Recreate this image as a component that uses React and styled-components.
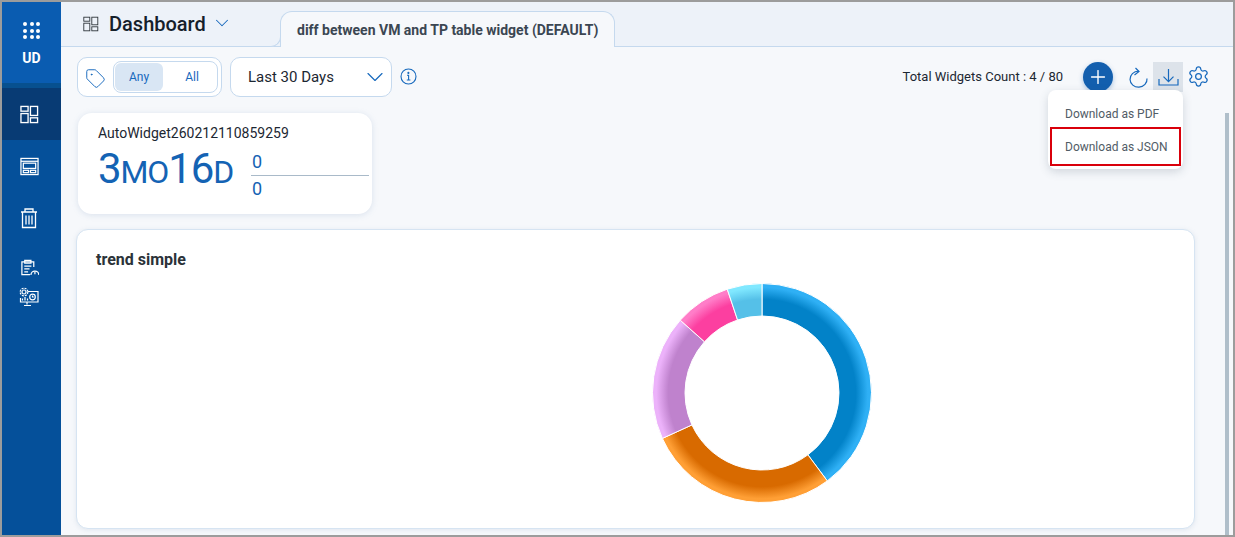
import React from "react";
import styled, { createGlobalStyle } from "styled-components";
import { ChevronDown, Settings, Tag, Plus } from "lucide-react";

const GlobalStyle = createGlobalStyle`
  html, body { margin: 0; padding: 0; }
  body { font-family: Roboto, "Liberation Sans", sans-serif; background: #fff; }
  * { box-sizing: border-box; }
`;

const Frame = styled.div`
  width: 1235px;
  height: 537px;
  border: 2px solid #9c9c9c;
  display: flex;
  overflow: hidden;
  position: relative;
`;

const Sidebar = styled.aside`
  width: 59px;
  flex-shrink: 0;
  background: #05509a;
  display: flex;
  flex-direction: column;
  align-items: center;
`;

const Brand = styled.div`
  width: 100%;
  height: 86px;
  background: #0a5cb1;
  border-bottom: 5px solid #07508f;
  display: flex;
  flex-direction: column;
  align-items: center;
  padding-top: 20px;
  gap: 11px;
  color: #fff;
  font-size: 14px;
  font-weight: 700;
`;

const Dots = styled.div`
  display: grid;
  grid-template-columns: repeat(3, 4px);
  gap: 2.5px;
`;

const Dot = styled.span`
  width: 4px;
  height: 4px;
  border-radius: 50%;
  background: #fff;
`;

const NavItem = styled.div`
  width: 100%;
  height: ${(p) => p.$h}px;
  padding-right: 5px;
  display: flex;
  align-items: center;
  justify-content: center;
  background: ${(p) => (p.$active ? "#083b74" : "transparent")};
`;

const Main = styled.div`
  flex: 1;
  display: flex;
  flex-direction: column;
  background: #f6f8fb;
  min-width: 0;
`;

const Header = styled.header`
  height: 45px;
  background: #edf2f9;
  border-bottom: 1px solid #c5d9ee;
  display: flex;
  align-items: flex-end;
  padding-left: 22px;
  flex-shrink: 0;
`;

const TitleGroup = styled.div`
  display: flex;
  align-items: center;
  align-self: stretch;
  width: 197px;
  gap: 10px;
  color: #15202b;
  font-size: 20px;
  font-weight: 500;
`;

const TitleChevron = styled(ChevronDown)`
  margin-left: -5px;
  margin-top: -3px;
`;

const Tab = styled.div`
  position: relative;
  width: 335px;
  height: 36px;
  margin-bottom: -1px;
  background: #f6f8fb;
  border: 1px solid #c5d9ee;
  border-bottom: none;
  border-radius: 12px 12px 0 0;
  display: flex;
  align-items: center;
  padding-left: 16px;
  font-size: 14px;
  font-weight: 700;
  color: #3b4652;

  &::before {
    content: "";
    position: absolute;
    left: -11px;
    bottom: 0;
    width: 10px;
    height: 10px;
    background: #edf2f9;
    border-right: 1px solid #c5d9ee;
    border-bottom: 1px solid #c5d9ee;
    border-bottom-right-radius: 10px;
  }
`;

const Content = styled.div`
  flex: 1;
  position: relative;
  padding: 9px 0 0 15px;
`;

const Toolbar = styled.div`
  display: flex;
  align-items: center;
  height: 41px;
  padding-left: 1px;
`;

const TagGroup = styled.div`
  width: 145px;
  height: 40px;
  background: #fff;
  border: 1px solid #c5d9ee;
  border-radius: 10px;
  display: flex;
  align-items: center;
  padding-left: 7px;
  gap: 7px;
`;

const TagIcon = styled(Tag)`
  margin-top: 3px;
`;

const Toggle = styled.div`
  width: 105px;
  height: 32px;
  border: 1px solid #c5d9ee;
  border-radius: 8px;
  display: flex;
  align-items: center;
  padding: 1px;
`;

const ToggleOption = styled.div`
  width: 48px;
  height: 28px;
  border-radius: 6px;
  background: ${(p) => (p.$on ? "#d9e6f4" : "transparent")};
  color: #1769bd;
  font-size: 12px;
  display: flex;
  align-items: center;
  justify-content: center;
  margin-right: ${(p) => (p.$on ? "5px" : "0")};
`;

const RangeSelect = styled.div`
  width: 162px;
  height: 40px;
  margin-left: 8px;
  background: #fff;
  border: 1px solid #c5d9ee;
  border-radius: 10px;
  display: flex;
  align-items: center;
  justify-content: space-between;
  padding: 0 2px 0 17px;
  font-size: 15px;
  color: #1c2732;
`;

const InfoWrap = styled.div`
  margin-left: 8px;
  display: flex;
`;

const Actions = styled.div`
  margin-left: auto;
  display: flex;
  align-items: center;
  padding-right: 20px;
`;

const Count = styled.span`
  font-size: 13px;
  color: #1c2732;
  margin-right: 20px;
`;

const AddButton = styled.div`
  width: 30px;
  height: 30px;
  border-radius: 50%;
  background: #135fae;
  box-shadow: 0 2px 5px rgba(19, 95, 174, 0.35);
  color: #fff;
  display: flex;
  align-items: center;
  justify-content: center;
  margin-right: 10px;
`;

const IconButton = styled.div`
  width: 30px;
  height: 30px;
  display: flex;
  align-items: center;
  justify-content: center;
  background: ${(p) => (p.$on ? "#dde3ea" : "transparent")};
`;

const Menu = styled.div`
  position: absolute;
  top: 43px;
  right: 50px;
  width: 135px;
  height: 79px;
  background: #fff;
  border-radius: 8px;
  box-shadow: 0 3px 10px rgba(60, 80, 100, 0.2);
  padding: 5px 2px 3px;
  display: flex;
  flex-direction: column;
  z-index: 2;
`;

const MenuItem = styled.div`
  height: ${(p) => (p.$boxed ? "39px" : "32px")};
  padding-left: ${(p) => (p.$boxed ? "13px" : "15px")};
  padding-top: ${(p) => (p.$boxed ? "0" : "6px")};
  display: flex;
  align-items: center;
  font-size: 12px;
  color: #515c66;
  border: ${(p) => (p.$boxed ? "2px solid #d9000b" : "none")};
`;

const WidgetCard = styled.div`
  width: 294px;
  height: 101px;
  margin: 16px 0 0 2px;
  background: #fff;
  border-radius: 14px;
  box-shadow: 0 1px 6px rgba(120, 150, 185, 0.22);
  padding: 12px 3px 0 20px;
`;

const WidgetName = styled.div`
  font-size: 14px;
  color: #1c2732;
  line-height: 16px;
  margin-bottom: -2px;
`;

const WidgetBody = styled.div`
  display: flex;
  align-items: center;
  color: #1463b4;
`;

const Duration = styled.div`
  width: 153px;
  display: flex;
  align-items: baseline;
  line-height: 44px;
  letter-spacing: -1.1px;
`;

const BigNum = styled.span`
  font-size: 42px;
`;

const BigUnit = styled.span`
  font-size: 32px;
`;

const Ratio = styled.div`
  flex: 1;
  display: flex;
  flex-direction: column;
  font-size: 18px;
  line-height: 26px;
  padding-top: 10px;
`;

const RatioValue = styled.div`
  padding-left: 1px;
  border-top: ${(p) => (p.$lower ? "1px solid #a9bac9" : "none")};
`;

const ChartCard = styled.section`
  width: 1119px;
  height: 300px;
  margin-top: 15px;
  background: #fff;
  border: 1px solid #d6e4f2;
  border-radius: 12px;
  box-shadow: 0 1px 5px rgba(120, 150, 185, 0.18);
  padding: 19px 19px 0;
  display: flex;
  flex-direction: column;
`;

const ChartTitle = styled.h3`
  margin: 2px 0 0;
  font-size: 16px;
  font-weight: 700;
  line-height: 18px;
  color: #2b3238;
`;

const ChartArea = styled.div`
  display: flex;
  justify-content: center;
  margin-top: 14px;
  padding-left: 252px;
`;

const ScrollThumb = styled.div`
  position: absolute;
  top: 66px;
  right: 4px;
  bottom: 0;
  width: 4px;
  background: #b0bfca;
`;

const SEGMENTS = [
  { id: "blue", from: 0, to: 143.4, base: "#0282c8", rim: "#2fb0f5" },
  { id: "orange", from: 143.4, to: 245.5, base: "#d86a00", rim: "#ff9f35" },
  { id: "purple", from: 245.5, to: 311.7, base: "#bf82cd", rim: "#ecb2fa" },
  { id: "pink", from: 311.7, to: 341.5, base: "#fc3fa0", rim: "#ff7dc8" },
  { id: "sky", from: 341.5, to: 360, base: "#55c0e8", rim: "#80e8ff" },
];

const polar = (r, deg) => {
  const a = (deg * Math.PI) / 180;
  return [110 + r * Math.sin(a), 110 - r * Math.cos(a)];
};

const sector = (from, to, outer = 109.5, inner = 77) => {
  const large = to - from > 180 ? 1 : 0;
  const [x1, y1] = polar(outer, from);
  const [x2, y2] = polar(outer, to);
  const [x3, y3] = polar(inner, to);
  const [x4, y4] = polar(inner, from);
  return `M${x1} ${y1}A${outer} ${outer} 0 ${large} 1 ${x2} ${y2}L${x3} ${y3}A${inner} ${inner} 0 ${large} 0 ${x4} ${y4}Z`;
};

const Donut = () => (
  <svg width="220" height="220" viewBox="0 0 220 220">
    <defs>
      {SEGMENTS.map((s) => (
        <radialGradient key={s.id} id={s.id} gradientUnits="userSpaceOnUse" cx="110" cy="110" r="109">
          <stop offset="0.86" stopColor={s.base} />
          <stop offset="0.97" stopColor={s.rim} />
        </radialGradient>
      ))}
    </defs>
    {SEGMENTS.map((s) => (
      <path key={s.id} d={sector(s.from, s.to)} fill={`url(#${s.id})`} stroke="#fff" strokeWidth="1" strokeLinejoin="round" />
    ))}
  </svg>
);

const DashIcon = ({ color = "#fff", size = 19, sw = 1.4 }) => (
  <svg width={size} height={size} viewBox="0 0 20 20" fill="none" stroke={color} strokeWidth={sw}>
    <rect x="1" y="1.5" width="7.5" height="5" />
    <rect x="1" y="9" width="7.5" height="9.5" />
    <rect x="11" y="1.5" width="7.5" height="9.5" />
    <rect x="11" y="13.5" width="7.5" height="5" />
  </svg>
);

const WindowIcon = () => (
  <svg width="19" height="19" viewBox="0 0 20 20" fill="none" stroke="#fff" strokeWidth="1.3">
    <rect x="1" y="1.5" width="18" height="17" />
    <path d="M1 4.5h18" />
    <rect x="3.5" y="6.5" width="13" height="5.5" />
    <rect x="3.5" y="14" width="5.5" height="2.5" />
    <rect x="11" y="14" width="5.5" height="2.5" />
  </svg>
);

const TrashIcon = () => (
  <svg width="18" height="21" viewBox="0 0 18 21" fill="none" stroke="#fff" strokeWidth="1.3">
    <path d="M1 4h16M5 4V1h8v3M2.5 4v15.5h13V4" />
    <path d="M6 7.5v9M9 7.5v9M12 7.5v9" />
  </svg>
);

const ReportIcon = () => (
  <svg width="19" height="17" viewBox="0 0 20 17" fill="none" stroke="#fff" strokeWidth="1.3">
    <path d="M10.5 16H2V2.5h12.5V8" />
    <path d="M5 1h6.5v3H5zM4.5 7h7.5M4.5 10h5.5M4.5 13h4" />
    <path d="M11.5 16.5a4.2 4.2 0 0 1 8.4 0" />
    <path d="M15.7 13v2.5" />
  </svg>
);

const MonitorIcon = () => (
  <svg width="20" height="20" viewBox="0 0 20 20" fill="none" stroke="#fff" strokeWidth="1.2">
    <path d="M9 4.5h10v10.5H1.5v-4" />
    <path d="M8 15v2.5M5 18.5h7" />
    <circle cx="5" cy="5" r="2" />
    <circle cx="5" cy="5" r="3.8" strokeDasharray="2 1" />
    <circle cx="13.5" cy="10" r="2.8" />
    <path d="M13.5 8.5V10h1.3M3.5 13.5v-2M6 13.5V10M8.5 13.5v-2" />
  </svg>
);

const InfoIcon = () => (
  <svg width="17" height="17" viewBox="0 0 17 17" fill="none" stroke="#1769bd" strokeWidth="1.1">
    <circle cx="8.5" cy="8.5" r="7.5" />
    <path d="M7 7.3h1.6v4.6M6.8 12h3.6" />
    <circle cx="8.4" cy="4.9" r="0.5" fill="#1769bd" />
  </svg>
);

const RefreshIcon = () => (
  <svg width="20" height="22" viewBox="0 0 20 22" fill="none" stroke="#1769bd" strokeWidth="1.2">
    <path d="M10.5 5.2A8.5 8 0 1 0 19 12.5" />
    <path d="M7.5 2 11 5.5 6.5 9" />
  </svg>
);

const DownloadIcon = () => (
  <svg width="21" height="20" viewBox="0 0 21 20" fill="none" stroke="#1769bd" strokeWidth="1.2">
    <path d="M10.5 2v13M5.5 9.7l5 5 5-5" />
    <path d="M1 12v6h19v-6" />
  </svg>
);

const App = () => (
  <Frame>
    <GlobalStyle />
    <Sidebar>
      <Brand>
        <Dots>
          {Array.from({ length: 9 }, (_, i) => (
            <Dot key={i} />
          ))}
        </Dots>
        UD
      </Brand>
      <NavItem $h={52} $active>
        <DashIcon />
      </NavItem>
      <NavItem $h={52}>
        <WindowIcon />
      </NavItem>
      <NavItem $h={52}>
        <TrashIcon />
      </NavItem>
      <NavItem $h={46}>
        <ReportIcon />
      </NavItem>
      <NavItem $h={14}>
        <MonitorIcon />
      </NavItem>
    </Sidebar>

    <Main>
      <Header>
        <TitleGroup>
          <DashIcon color="#2b3238" size={16} sw={1.1} />
          Dashboard
          <TitleChevron size={22} color="#1769bd" strokeWidth={1.1} />
        </TitleGroup>
        <Tab>diff between VM and TP table widget (DEFAULT)</Tab>
      </Header>

      <Content>
        <Toolbar>
          <TagGroup>
            <TagIcon size={21} color="#1769bd" strokeWidth={1.1} />
            <Toggle>
              <ToggleOption $on>Any</ToggleOption>
              <ToggleOption>All</ToggleOption>
            </Toggle>
          </TagGroup>
          <RangeSelect>
            Last 30 Days
            <ChevronDown size={28} color="#1769bd" strokeWidth={1} />
          </RangeSelect>
          <InfoWrap>
            <InfoIcon />
          </InfoWrap>
          <Actions>
            <Count>Total Widgets Count : 4 / 80</Count>
            <AddButton>
              <Plus size={22} strokeWidth={1.5} />
            </AddButton>
            <IconButton>
              <RefreshIcon />
            </IconButton>
            <IconButton $on>
              <DownloadIcon />
            </IconButton>
            <IconButton>
              <Settings size={23} color="#1769bd" strokeWidth={1.3} />
            </IconButton>
          </Actions>
        </Toolbar>

        <Menu>
          <MenuItem>Download as PDF</MenuItem>
          <MenuItem $boxed>Download as JSON</MenuItem>
        </Menu>

        <WidgetCard>
          <WidgetName>AutoWidget260212110859259</WidgetName>
          <WidgetBody>
            <Duration>
              <BigNum>3</BigNum>
              <BigUnit>MO</BigUnit>
              <BigNum>16</BigNum>
              <BigUnit>D</BigUnit>
            </Duration>
            <Ratio>
              <RatioValue>0</RatioValue>
              <RatioValue $lower>0</RatioValue>
            </Ratio>
          </WidgetBody>
        </WidgetCard>

        <ChartCard>
          <ChartTitle>trend simple</ChartTitle>
          <ChartArea>
            <Donut />
          </ChartArea>
        </ChartCard>

        <ScrollThumb />
      </Content>
    </Main>
  </Frame>
);

export default App;
